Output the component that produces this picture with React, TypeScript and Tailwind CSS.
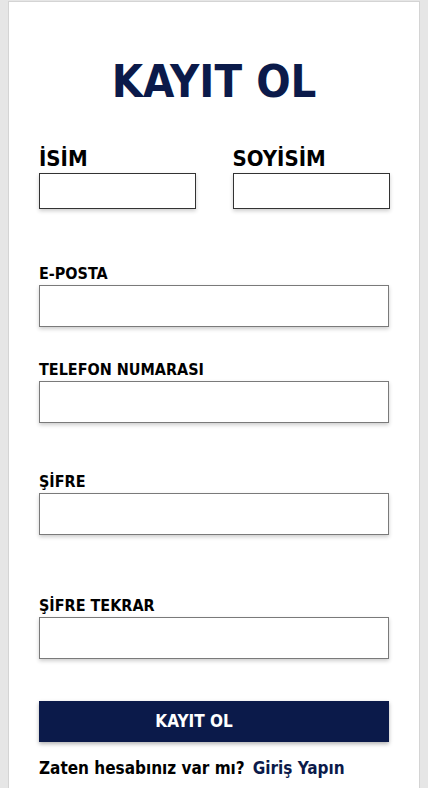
// Register form card: title, name row, stacked fields, submit, login link
const fields = [
  { label: "E-POSTA", type: "email", top: "mt-[55px]" },
  { label: "TELEFON NUMARASI", type: "tel", top: "mt-[33px]" },
  { label: "ŞİFRE", type: "password", top: "mt-[49px]" },
  { label: "ŞİFRE TEKRAR", type: "password", top: "mt-[61px]" },
];

const font = "font-['DejaVu_Sans_Condensed',sans-serif]";

export default function App() {
  return (
    <div className={`min-h-[788px] bg-[#e6e6e6] px-2 pt-px ${font}`}>
      <div className="min-h-[790px] border border-[#d4d4d4] bg-white px-[30px] pb-4">
        {/* title */}
        <h1 className="mt-[50px] text-center text-[45px] font-bold leading-[60px] text-[#0b1a4a]">
          KAYIT OL
        </h1>

        {/* name row */}
        <div className="mt-[33px] grid grid-cols-2 gap-[37px]">
          <div>
            <label className="block text-[22px] font-bold leading-[28px] text-black">İSİM</label>
            <input className="block h-[36px] w-[157px] border border-[#333] bg-white shadow-[0_2px_4px_rgba(0,0,0,0.2)]" />
          </div>
          <div>
            <label className="block text-[22px] font-bold leading-[28px] text-black">SOYİSİM</label>
            <input className="block h-[36px] w-[157px] border border-[#333] bg-white shadow-[0_2px_4px_rgba(0,0,0,0.2)]" />
          </div>
        </div>

        {fields.map((f) => (
          <div key={f.label} className={f.top}>
            <label className="block text-[16px] font-bold leading-[20px] text-black">{f.label}</label>
            <input
              type={f.type}
              className="mt-[1px] block h-[42px] w-full border border-[#7a7a7a] bg-white shadow-[0_2px_4px_rgba(0,0,0,0.2)]"
            />
          </div>
        ))}

        <button className="mt-[42px] flex h-[41px] w-full items-center justify-center bg-[#0b1a4a] pr-10 text-[17px] font-bold text-white shadow-[0_2px_4px_rgba(0,0,0,0.3)]">
          KAYIT OL
        </button>

        <p className="mt-[14px] text-[17px] font-bold text-black">
          Zaten hesabınız var mı?
          <a className="ml-2 text-[#0b1a4a]">Giriş Yapın</a>
        </p>
      </div>
    </div>
  );
}
